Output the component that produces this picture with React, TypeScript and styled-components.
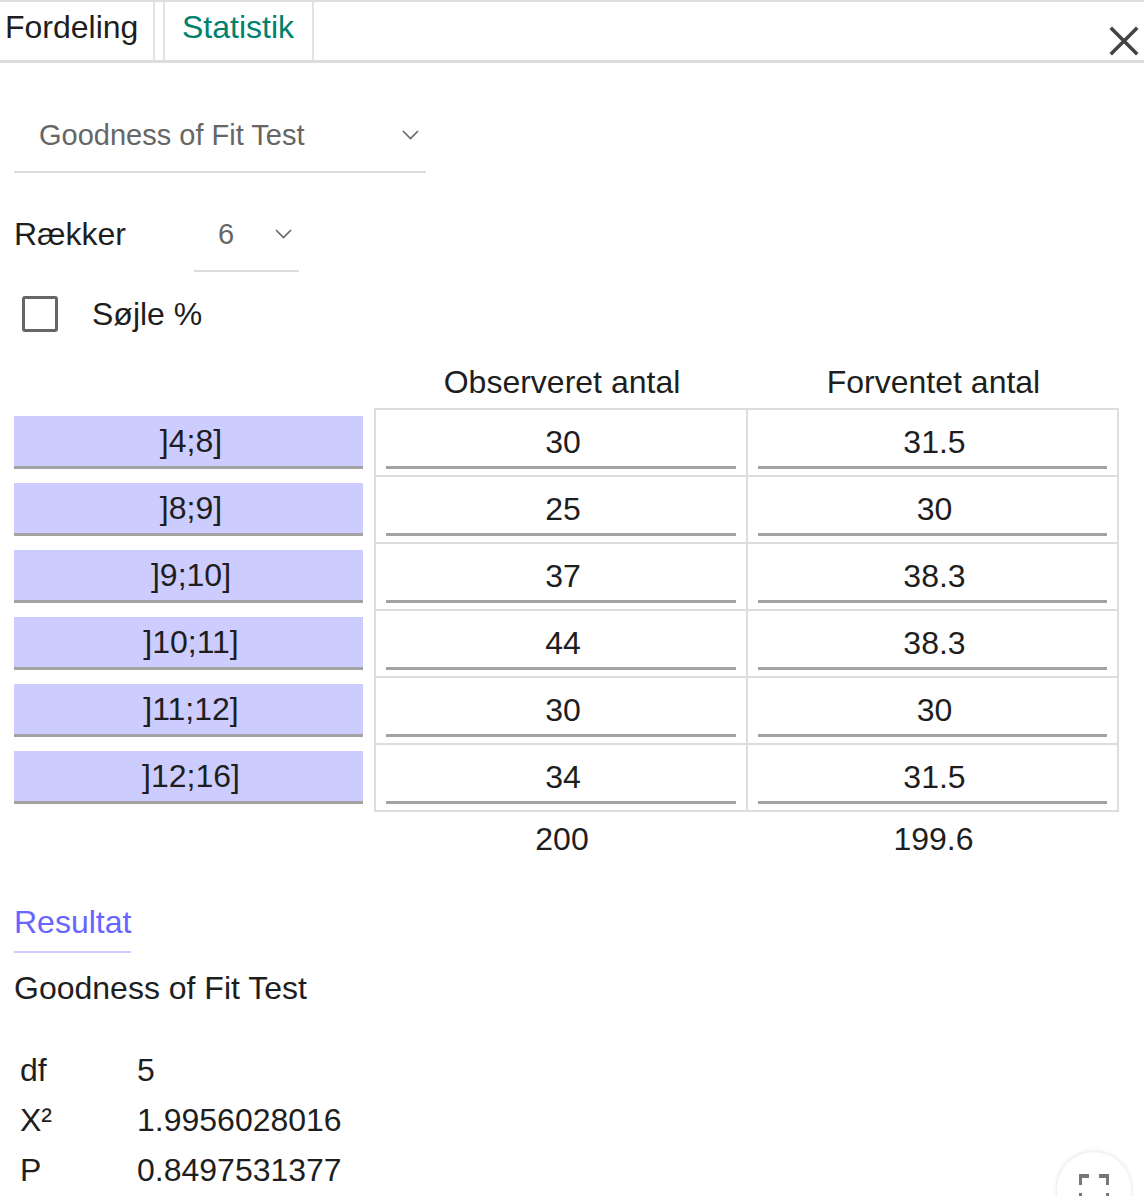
import React from "react";
import styled, { createGlobalStyle } from "styled-components";

const Global = createGlobalStyle`
  html, body { margin: 0; padding: 0; background: #fff; }
  body { font-family: "Liberation Sans", Arial, Helvetica, sans-serif; color: #1e1e1e; }
  * { box-sizing: border-box; }
`;

const Page = styled.div`
  position: relative;
  width: 1144px;
  height: 1196px;
  overflow: hidden;
  background: #fff;
`;

const TabBar = styled.div`
  display: flex;
  align-items: stretch;
  height: 63px;
  border-top: 2px solid #dedede;
  border-bottom: 3px solid #dcdcdc;
`;

const Tab = styled.div<{ $active?: boolean; $first?: boolean }>`
  display: flex;
  align-items: center;
  font-size: 32px;
  line-height: 1;
  padding-bottom: 8px;
  color: ${(p) => (p.$active ? "#00816d" : "#1e1e1e")};
  width: ${(p) => (p.$first ? "155px" : "151px")};
  padding-left: ${(p) => (p.$first ? "5px" : "17px")};
  border-right: 2px solid #e2e2e2;
  border-left: ${(p) => (p.$first ? "none" : "2px solid #e2e2e2")};
  margin-right: ${(p) => (p.$first ? "8px" : "0")};
`;

const CloseButton = styled.div`
  margin-left: auto;
  display: flex;
  align-items: flex-end;
  padding: 0 5px 4px 0;
`;

const Content = styled.div`
  padding-left: 14px;
`;

const MainSelect = styled.div`
  margin-top: 32px;
  width: 412px;
  height: 78px;
  display: flex;
  align-items: center;
  justify-content: space-between;
  padding: 4px 7px 0 25px;
  border-bottom: 2px solid #dddddd;
  font-size: 29px;
  color: #666;
`;

const RowsLine = styled.div`
  margin-top: 29px;
  display: flex;
  align-items: stretch;
  height: 70px;
`;

const RowsLabel = styled.div`
  width: 180px;
  display: flex;
  align-items: center;
  padding-bottom: 6px;
  font-size: 32px;
`;

const SmallSelect = styled.div`
  width: 105px;
  display: flex;
  align-items: center;
  justify-content: space-between;
  padding: 0 7px 4px 24px;
  border-bottom: 2px solid #dddddd;
  font-size: 29px;
  color: #666;
`;

const CheckLine = styled.div`
  margin-top: 24px;
  display: flex;
  align-items: center;
  height: 36px;
  gap: 34px;
  padding-left: 8px;
  font-size: 32px;
`;

const CheckBox = styled.div`
  width: 36px;
  height: 36px;
  border: 3px solid #666;
  border-radius: 3px;
`;

const TableArea = styled.div`
  margin-top: 26px;
`;

const HeaderRow = styled.div`
  display: grid;
  grid-template-columns: 362px 372px 371px;
  height: 50px;
  align-items: center;
  font-size: 32px;
`;

const HeaderCell = styled.div`
  text-align: center;
  padding-bottom: 1px;
`;

const Body = styled.div`
  display: flex;
  align-items: flex-start;
`;

const LabelCol = styled.div`
  width: 349px;
  margin-right: 11px;
  padding-top: 8px;
  display: flex;
  flex-direction: column;
  gap: 14px;
`;

const LabelCell = styled.div`
  height: 53px;
  background: #ccccff;
  border-bottom: 3px solid #a3a3a3;
  display: flex;
  align-items: center;
  justify-content: center;
  padding-left: 5px;
  font-size: 32px;
  color: #1e1e1e;
`;

const DataGrid = styled.div`
  display: grid;
  grid-template-columns: 372px 371px;
  border-top: 2px solid #dddddd;
  border-left: 2px solid #dddddd;
`;

const DataCell = styled.div`
  height: 67px;
  border-right: 2px solid #dddddd;
  border-bottom: 2px solid #dddddd;
  padding: 8px 10px 6px 10px;
`;

const ValueBox = styled.div`
  height: 51px;
  border-bottom: 3px solid #a3a3a3;
  display: flex;
  align-items: center;
  justify-content: center;
  padding-left: 4px;
  font-size: 32px;
`;

const TotalsRow = styled.div`
  display: grid;
  grid-template-columns: 362px 372px 371px;
  height: 54px;
  align-items: center;
  font-size: 32px;
`;

const TotalCell = styled.div`
  text-align: center;
`;

const ResultTab = styled.div`
  margin-top: 38px;
  display: inline-block;
  font-size: 32px;
  color: #6666ff;
  padding-bottom: 10px;
  border-bottom: 2px solid #ccccff;
`;

const ResultTitle = styled.div`
  margin-top: 17px;
  font-size: 32px;
`;

const ResultTable = styled.div`
  margin-top: 38px;
  padding-left: 6px;
  display: grid;
  grid-template-columns: 117px auto;
  grid-auto-rows: 50px;
  align-items: center;
  font-size: 32px;
`;

const FullscreenButton = styled.div`
  position: absolute;
  left: 1057px;
  top: 1152px;
  width: 74px;
  height: 74px;
  border-radius: 50%;
  background: #fff;
  box-shadow: 0 0 5px rgba(0, 0, 0, 0.14);
  display: flex;
  align-items: center;
  justify-content: center;
`;

const Chevron = ({ w = 17 }: { w?: number }) => (
  <svg width={w} height={10} viewBox="0 0 17 10" fill="none">
    <path d="M1 1 L8.5 8.5 L16 1" stroke="#666" strokeWidth="1.6" />
  </svg>
);

const CloseIcon = () => (
  <svg width="30" height="30" viewBox="0 0 30 30">
    <path d="M3 3 L27 27 M27 3 L3 27" stroke="#444" strokeWidth="3.6" strokeLinecap="square" />
  </svg>
);

const FullIcon = () => (
  <svg width="30" height="30" viewBox="0 0 30 30" fill="none" stroke="#777" strokeWidth="4">
    <path d="M1 11 V2 H10 M20 2 H29 V11 M29 19 V28 H20 M10 28 H1 V19" strokeLinecap="butt" />
  </svg>
);

const rows = [
  { label: "]4;8]", obs: "30", exp: "31.5" },
  { label: "]8;9]", obs: "25", exp: "30" },
  { label: "]9;10]", obs: "37", exp: "38.3" },
  { label: "]10;11]", obs: "44", exp: "38.3" },
  { label: "]11;12]", obs: "30", exp: "30" },
  { label: "]12;16]", obs: "34", exp: "31.5" },
];

const results = [
  { k: "df", v: "5" },
  { k: "X²", v: "1.9956028016" },
  { k: "P", v: "0.8497531377" },
];

export default function App() {
  return (
    <Page>
      <Global />
      <TabBar>
        <Tab $first>Fordeling</Tab>
        <Tab $active>Statistik</Tab>
        <CloseButton>
          <CloseIcon />
        </CloseButton>
      </TabBar>
      <Content>
        <MainSelect>
          <span>Goodness of Fit Test</span>
          <Chevron />
        </MainSelect>
        <RowsLine>
          <RowsLabel>Rækker</RowsLabel>
          <SmallSelect>
            <span>6</span>
            <Chevron />
          </SmallSelect>
        </RowsLine>
        <CheckLine>
          <CheckBox />
          <span>Søjle %</span>
        </CheckLine>
        <TableArea>
          <HeaderRow>
            <span />
            <HeaderCell>Observeret antal</HeaderCell>
            <HeaderCell>Forventet antal</HeaderCell>
          </HeaderRow>
          <Body>
            <LabelCol>
              {rows.map((r) => (
                <LabelCell key={r.label}>{r.label}</LabelCell>
              ))}
            </LabelCol>
            <DataGrid>
              {rows.map((r) => (
                <React.Fragment key={r.label}>
                  <DataCell>
                    <ValueBox>{r.obs}</ValueBox>
                  </DataCell>
                  <DataCell>
                    <ValueBox>{r.exp}</ValueBox>
                  </DataCell>
                </React.Fragment>
              ))}
            </DataGrid>
          </Body>
          <TotalsRow>
            <span />
            <TotalCell>200</TotalCell>
            <TotalCell>199.6</TotalCell>
          </TotalsRow>
        </TableArea>
        <ResultTab>Resultat</ResultTab>
        <ResultTitle>Goodness of Fit Test</ResultTitle>
        <ResultTable>
          {results.map((r) => (
            <React.Fragment key={r.k}>
              <span>{r.k}</span>
              <span>{r.v}</span>
            </React.Fragment>
          ))}
        </ResultTable>
      </Content>
      <FullscreenButton>
        <FullIcon />
      </FullscreenButton>
    </Page>
  );
}
